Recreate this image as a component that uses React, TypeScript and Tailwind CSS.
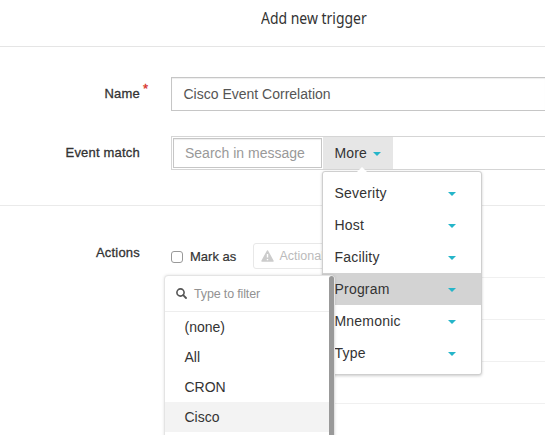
import type { ReactNode } from "react";

function Caret() {
  return (
    <svg width="8" height="4" viewBox="0 0 8 4" className="mt-[2px] shrink-0 fill-[#25b5c9]">
      <path d="M0 0H8L4 4Z" />
    </svg>
  );
}

function Label({ children, required }: { children: ReactNode; required?: boolean }) {
  return (
    <div className="relative w-[140px] shrink-0 text-right text-[13px] leading-5 tracking-[0.2px] text-[#333] [-webkit-text-stroke:0.3px_#333]">
      {children}
      {required && (
        <span className="absolute -top-[5px] left-[143px] text-[13px] tracking-normal text-[#d8342c] [-webkit-text-stroke:0.35px_#d8342c]">*</span>
      )}
    </div>
  );
}

const filters = ["Severity", "Host", "Facility", "Program", "Mnemonic", "Type"];
const programs = ["(none)", "All", "CRON", "Cisco"];

function MoreMenu() {
  return (
    <div className="absolute top-[34px] left-[150px] z-10 w-[160px] rounded-[3px] border border-[#cfcfcf] bg-white py-[5px] shadow-[0_1px_3px_rgba(0,0,0,0.2)]">
      <svg width="12" height="7" viewBox="0 0 12 7" className="absolute -top-[6px] left-[33px] fill-white">
        <path d="M0 7L6 1L12 7Z" />
      </svg>
      {filters.map((name) => (
        <div
          key={name}
          className={`flex h-8 items-center justify-between pr-[25px] pl-[11.5px] text-[14px] tracking-[0.2px] text-[#333] ${name === "Program" ? "bg-[#d3d3d3]" : ""}`}
        >
          <span>{name}</span>
          <Caret />
        </div>
      ))}
    </div>
  );
}

function ProgramPicker() {
  return (
    <div className="absolute top-[275px] left-[164px] z-20 w-[171px] rounded-t-[4px] border border-[#e4e4e4] bg-white shadow-[0_0_3px_rgba(0,0,0,0.12)]">
      <div className="flex h-[36px] items-center border-b border-[#eee] pl-[11px]">
        <svg width="11" height="11" viewBox="0 0 11 11" fill="none" stroke="#555" className="shrink-0">
          <circle cx="4.5" cy="4.5" r="3.6" strokeWidth="1.6" />
          <path d="M7.2 7.2L10 10" strokeWidth="1.8" strokeLinecap="round" />
        </svg>
        <span className="ml-[7px] pt-px text-[12.5px] tracking-[-0.15px] text-[#929292]">Type to filter</span>
      </div>
      {programs.map((name) => (
        <div
          key={name}
          className={`flex h-[30px] items-center pl-[19.5px] text-[14px] text-[#333] ${name === "Cisco" ? "bg-[#f3f3f3]" : ""}`}
        >
          {name}
        </div>
      ))}
      <div className="h-[10px]" />
      <div className="absolute top-0 right-0 bottom-0 w-[5px] rounded-t-[3px] bg-[#999]" />
    </div>
  );
}

export default function App() {
  return (
    <div className="relative h-[435px] w-[545px] overflow-hidden bg-white font-['Liberation_Sans',Arial,sans-serif]">
      <header className="h-[47px] border-b border-[#e5e5e5] pt-[8px] pl-[261px] font-['Noto_Sans',sans-serif] text-[15.5px] leading-5 text-[#333]">
        <span className="inline-block origin-left scale-x-[0.9] whitespace-nowrap">Add new trigger</span>
      </header>

      <section className="h-[159px] border-b border-[#eaeaea] pt-[30px]">
        <div className="flex h-[34px] gap-[31px]">
          <div className="pt-[7px]">
            <Label required>Name</Label>
          </div>
          <div className="flex grow items-center border border-r-0 border-[#c6c6c6] pl-[11.5px] text-[14px] text-[#555] shadow-[inset_0_1px_1px_rgba(0,0,0,0.07)]">
            Cisco Event Correlation
          </div>
        </div>
        <div className="mt-[25px] flex h-[34px] gap-[31px]">
          <div className="pt-[7px]">
            <Label>Event match</Label>
          </div>
          <div className="relative flex grow border border-r-0 border-[#d5d5d5]">
            <div className="my-px ml-px flex w-[149px] items-center border border-[#c6c6c6] pl-[11px] text-[14px] text-[#999] shadow-[inset_0_1px_1px_rgba(0,0,0,0.07)]">
              Search in message
            </div>
            <div className="ml-px flex w-[70px] items-center gap-[6px] bg-[#e6e6e6] pl-[11.5px] text-[14px] tracking-[0.15px] text-[#333]">
              More
              <Caret />
            </div>
            <MoreMenu />
          </div>
        </div>
      </section>

      <section className="flex gap-[31px] pt-[37px]">
        <Label>Actions</Label>
        <div className="grow">
          <div className="flex h-[35px] border-b border-[#f0f0f0]">
            <div className="flex h-[26px] w-[82px] items-center pt-px">
              <span className="h-[12px] w-[12px] rounded-[3px] border border-[#999] bg-white" />
              <span className="ml-[7px] text-[13px] text-[#333] [-webkit-text-stroke:0.2px_#333]">Mark as</span>
            </div>
            <div className="flex h-[26px] w-[120px] items-center rounded-[3px] border border-[#e8e8e8] pl-[7px] text-[12.5px] text-[#bbb]">
              <svg width="13" height="12" viewBox="0 0 13 12" className="mr-[5.5px] shrink-0">
                <path d="M6.5 1L12 11H1Z" fill="#ccc" stroke="#ccc" strokeWidth="1.5" strokeLinejoin="round" />
                <path d="M6.5 4V7.5M6.5 9V10.3" stroke="#fff" strokeWidth="1.4" />
              </svg>
              Actional
            </div>
          </div>
          <div className="h-[42px] border-b border-[#f0f0f0]" />
          <div className="h-[42px] border-b border-[#f0f0f0]" />
          <div className="h-[42px] border-b border-[#f0f0f0]" />
        </div>
      </section>
      <ProgramPicker />
    </div>
  );
}
